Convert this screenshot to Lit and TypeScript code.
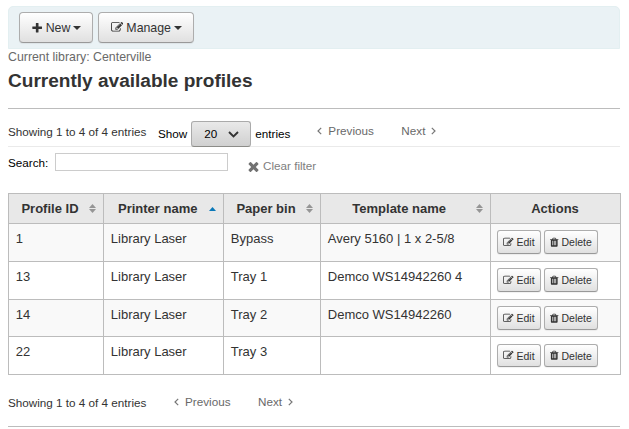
import { LitElement, html, css, svg } from "lit";
import { customElement } from "lit/decorators.js";
import { classMap } from "lit/directives/class-map.js";

const shapes = {
  plus: "M1600 736v192q0 40-28 68t-68 28h-416v416q0 40-28 68t-68 28h-192q-40 0-68-28t-28-68v-416h-416q-40 0-68-28t-28-68v-192q0-40 28-68t68-28h416v-416q0-40 28-68t68-28h192q40 0 68 28t28 68v416h416q40 0 68 28t28 68z",
  edit: "M888 1184l116-116-152-152-116 116v56h96v96h56zm440-720q-16-16-33 1l-350 350q-17 17-1 33t33-1l350-350q17-17 1-33zm80 594v190q0 119-84.5 203.5t-203.5 84.5h-832q-119 0-203.5-84.5t-84.5-203.5v-832q0-119 84.5-203.5t203.5-84.5h832q63 0 117 25 15 7 18 23 3 17-9 29l-49 49q-14 14-32 8-23-6-45-6h-832q-66 0-113 47t-47 113v832q0 66 47 113t113 47h832q66 0 113-47t47-113v-126q0-13 9-22l64-64q15-15 35-7t20 29zm-96-738l288 288-672 672h-288v-288zm444 132l-92 92-288-288 92-92q28-28 68-28t68 28l152 152q28 28 28 68t-28 68z",
  trash: "M704 1376v-704q0-14-9-23t-23-9h-64q-14 0-23 9t-9 23v704q0 14 9 23t23 9h64q14 0 23-9t9-23zm256 0v-704q0-14-9-23t-23-9h-64q-14 0-23 9t-9 23v704q0 14 9 23t23 9h64q14 0 23-9t9-23zm256 0v-704q0-14-9-23t-23-9h-64q-14 0-23 9t-9 23v704q0 14 9 23t23 9h64q14 0 23-9t9-23zm-544-992h448l-48-117q-7-9-17-11h-317q-10 2-17 11zm928 32v64q0 14-9 23t-23 9h-96v948q0 83-47 143.5t-113 60.5h-832q-66 0-113-58.5t-47-141.5v-952h-96q-14 0-23-9t-9-23v-64q0-14 9-23t23-9h309l70-167q15-37 54-63t79-26h320q40 0 79 26t54 63l70 167h309q14 0 23 9t9 23z",
  times: "M1490 1322q0 40-28 68l-136 136q-28 28-68 28t-68-28l-294-294-294 294q-28 28-68 28t-68-28l-136-136q-28-28-28-68t28-68l294-294-294-294q-28-28-28-68t28-68l136-136q28-28 68-28t68 28l294 294 294-294q28-28 68-28t68 28l136 136q28 28 28 68t-28 68l-294 294 294 294q28 28 28 68z",
};

const icon = (name: keyof typeof shapes) =>
  html`<svg class="icon ${name}" viewBox="0 0 1792 1792">${svg`<path d=${shapes[name]} />`}</svg>`;

const chevron = (d: string) => html`<svg class="chevron" viewBox="0 0 5 8"><path d=${d} /></svg>`;

const columns = [
  { label: "Profile ID", sort: "both" },
  { label: "Printer name", sort: "asc" },
  { label: "Paper bin", sort: "both" },
  { label: "Template name", sort: "both" },
  { label: "Actions", sort: "" },
];

const profiles = [
  ["1", "Library Laser", "Bypass", "Avery 5160 | 1 x 2-5/8"],
  ["13", "Library Laser", "Tray 1", "Demco WS14942260 4"],
  ["14", "Library Laser", "Tray 2", "Demco WS14942260"],
  ["22", "Library Laser", "Tray 3", ""],
];

@customElement("app-root")
export class AppRoot extends LitElement {
  static styles = css`
    :host {
      display: block;
      box-sizing: border-box;
      height: 429px;
      padding: 6px 9px 0 8px;
      overflow: hidden;
      background: #fff;
      color: #333;
      font-family: "Liberation Sans", Arial, sans-serif;
      font-size: 13px;
      white-space: nowrap;
    }
    .icon { flex: none; fill: currentColor; display: block; }
    .toolbar {
      display: flex;
      gap: 5px;
      box-sizing: border-box;
      height: 43px;
      padding: 5px 10px;
      border: 1px solid #e3eff1;
      border-radius: 5px 5px 0 0;
      background: #eaf2f5;
    }
    .btn {
      display: flex;
      align-items: center;
      box-sizing: border-box;
      border: 1px solid #adadad;
      border-bottom-color: #999;
      border-radius: 4px;
      background: linear-gradient(#fff, #e0e0e0);
      color: #333;
      font: 12.35px "Liberation Sans", Arial, sans-serif;
      padding: 0;
      box-shadow: 0 1px 1px rgba(0, 0, 0, 0.06);
    }
    .toolbar .btn { height: 31px; padding-left: 11px; }
    .toolbar .icon { width: 12.35px; height: 12.35px; margin: 1px 2.3px 0 0; }
    .toolbar .edit { margin: 0 3px 0 1px; }
    .new { width: 74px; }
    .manage { width: 96px; }
    .caret {
      margin-left: 3px;
      border: 4px solid transparent;
      border-top-color: currentColor;
      border-bottom: 0;
    }
    .library { height: 15px; padding-top: 1px; line-height: 15px; font-size: 12.35px; color: #696969; }
    h1 { margin: 4px 0 0; height: 24px; line-height: 24px; font-size: 19.06px; }
    .rule { height: 1px; background: #bcbcbc; }
    .top { margin-top: 15px; }
    .bar { display: flex; font-size: 11.7px; line-height: 14px; }
    .controls { height: 37px; border-bottom: 1px solid #eaeaea; }
    .controls .info { width: 150px; padding-top: 16px; }
    .length { display: flex; align-items: flex-start; color: #000; }
    .length span { margin-top: 18px; }
    .select {
      display: flex;
      align-items: center;
      justify-content: space-between;
      box-sizing: border-box;
      width: 60px;
      height: 26px;
      margin: 12px 4px 0 4px;
      padding: 0 11px 0 12px;
      border: 1px solid #aaa;
      border-bottom-color: #8c8c88;
      border-radius: 3px;
      background: linear-gradient(#e9e9e9, #d0d0d0);
    }
    .select svg { width: 11px; height: 7px; fill: none; stroke: #333; stroke-width: 1.9; }
    .pager { display: flex; color: #696969; }
    .chevron { width: 5px; height: 8px; margin-top: 3px; fill: none; stroke: #777; stroke-width: 1.2; }
    .controls .pager { margin: 15px 0 0 27px; }
    .prev { display: flex; gap: 6px; width: 84px; }
    .next { display: flex; gap: 6px; }
    .search { height: 46px; color: #000; }
    .search label { width: 47px; padding-top: 9px; }
    .search input {
      box-sizing: border-box;
      width: 173px;
      height: 18px;
      margin: 6px 0 0;
      padding: 0;
      border: 1px solid #ccc;
    }
    .clear { display: flex; margin: 12px 0 0 19px; color: #7e7e7e; }
    .clear .icon { width: 15px; height: 15px; margin: 0 2px 0 -1px; color: #727272; }
    .grid {
      display: grid;
      grid-template-columns: 94px 119px 96px 169px 129px;
      grid-template-rows: 29px 37px 37px 36px 37px;
      gap: 1px;
      width: 611px;
      border: 1px solid #bcbcbc;
      background: #bcbcbc;
    }
    .head {
      display: flex;
      align-items: center;
      justify-content: center;
      gap: 10px;
      padding-left: 5px;
      background: #e8e8e8;
      font-weight: bold;
      line-height: 15px;
    }
    .head:nth-child(2) { gap: 12px; padding-left: 7.5px; }
    .head.plain { padding: 0 1px 0 0; }
    .head:nth-child(4) { justify-content: flex-end; gap: 30px; padding-right: 7px; }
    .sort { width: 7px; height: 9px; margin-top: -1px; fill: #959595; }
    .sort.asc { fill: #0a78b8; margin-top: 0; }
    .cell { background: #fff; padding: 7px 7px 0 6.8px; line-height: 15px; }
    .odd { background: #f9f9f9; }
    .actions { display: flex; gap: 3px; padding: 6px 0 0 6px; }
    .actions .btn { height: 24px; padding-left: 5px; font-size: 10.5px; border-radius: 3px; }
    .last .btn { height: 23px; margin-top: 1px; }
    .edit-btn { width: 44px; }
    .delete-btn { width: 54px; }
    .actions .icon { width: 10.5px; height: 10.5px; margin-right: 3px; }
    .actions .trash { margin: 0 2px 0 -1px; }
    .bottom { height: 51px; }
    .bottom .info { width: 166px; padding-top: 21px; }
    .bottom .pager { margin-top: 20px; }
  `;

  private pager() {
    return html`<div class="pager">
      <div class="prev">${chevron("M4.2 .8L1 4l3.2 3.2")}<span>Previous</span></div>
      <div class="next"><span>Next</span>${chevron("M.8 .8L4 4L.8 7.2")}</div>
    </div>`;
  }

  private sortMark(sort: string) {
    if (!sort) return "";
    const d = sort === "asc" ? "M0 7L3.5 3L7 7z" : "M0 4L3.5 0L7 4zM0 5H7L3.5 9z";
    return html`<svg class="sort ${sort}" viewBox="0 0 7 9"><path d=${d} /></svg>`;
  }

  render() {
    return html`
      <div class="toolbar">
        <button class="btn new">${icon("plus")}<span>New</span><i class="caret"></i></button>
        <button class="btn manage">${icon("edit")}<span>Manage</span><i class="caret"></i></button>
      </div>
      <div class="library">Current library: Centerville</div>
      <h1>Currently available profiles</h1>
      <div class="rule top"></div>
      <div class="bar controls">
        <div class="info">Showing 1 to 4 of 4 entries</div>
        <div class="length">
          <span>Show</span>
          <div class="select">20<svg viewBox="0 0 11 7"><path d="M1 1l4.5 4.5L10 1" /></svg></div>
          <span>entries</span>
        </div>
        ${this.pager()}
      </div>
      <div class="bar search">
        <label for="q">Search:</label><input id="q" />
        <div class="clear">${icon("times")}<span>Clear filter</span></div>
      </div>
      <div class="grid">
        ${columns.map((c) => html`<div class=${classMap({ head: true, plain: !c.sort })}>
          <span>${c.label}</span>${this.sortMark(c.sort)}
        </div>`)}
        ${profiles.map((row, i) => html`
          ${row.map((v) => html`<div class=${classMap({ cell: true, odd: i % 2 === 0 })}>${v}</div>`)}
          <div class=${classMap({ cell: true, actions: true, odd: i % 2 === 0, last: i === 3 })}>
            <button class="btn edit-btn">${icon("edit")}<span>Edit</span></button>
            <button class="btn delete-btn">${icon("trash")}<span>Delete</span></button>
          </div>`)}
      </div>
      <div class="bar bottom">
        <div class="info">Showing 1 to 4 of 4 entries</div>
        ${this.pager()}
      </div>
      <div class="rule"></div>
    `;
  }
}
